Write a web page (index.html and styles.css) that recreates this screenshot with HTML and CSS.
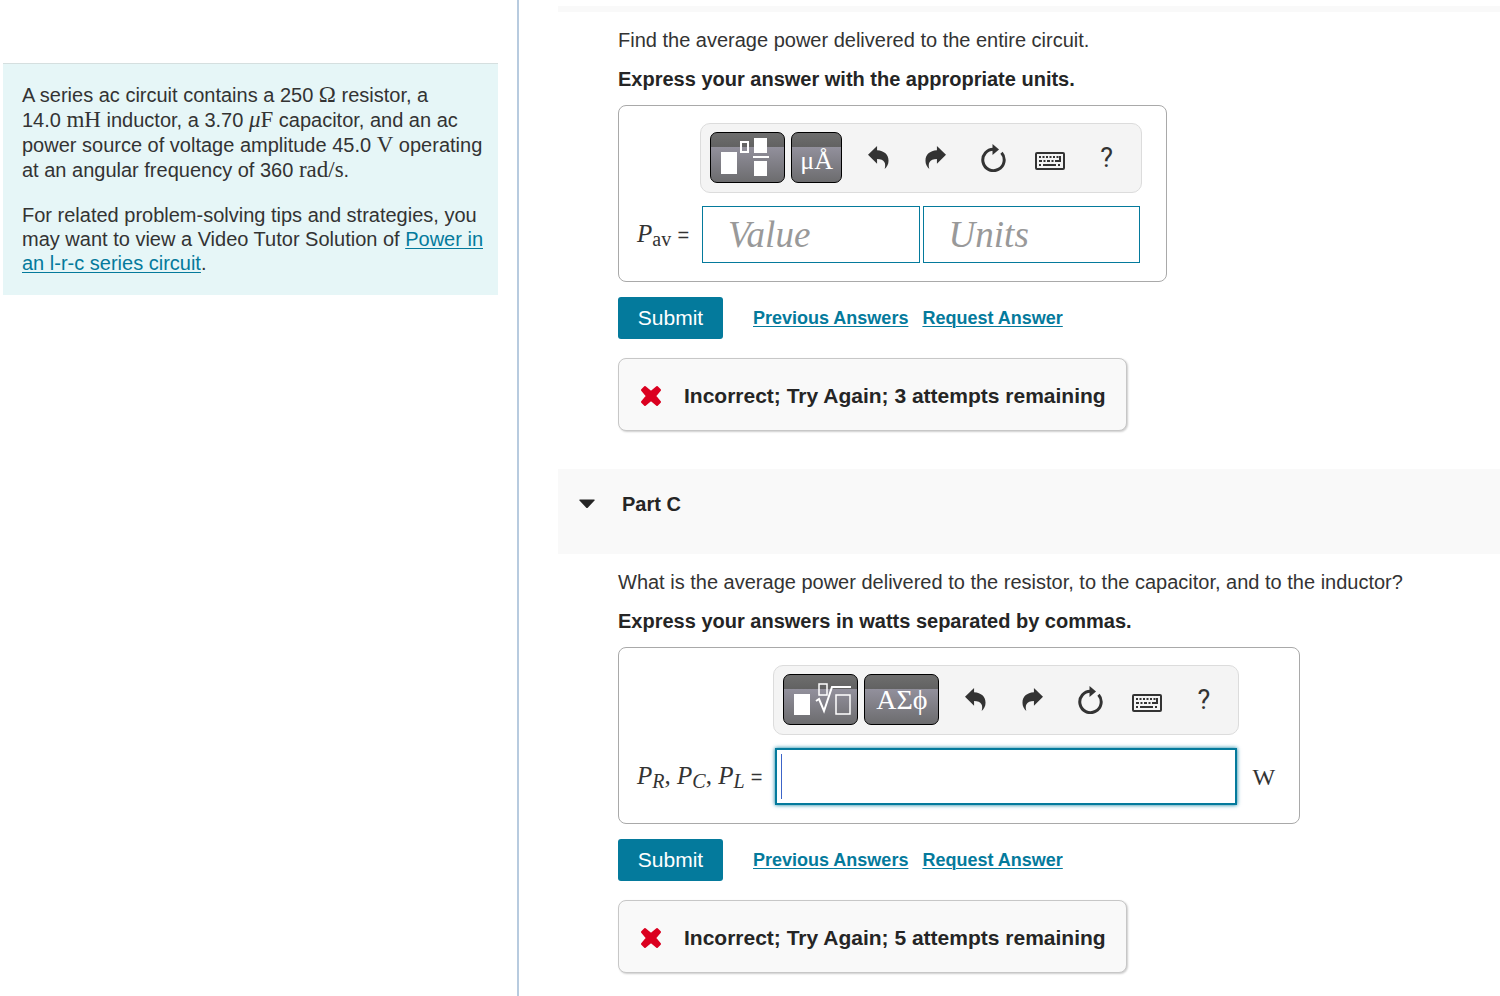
FILE: index.html
```html
<!DOCTYPE html>
<html lang="en">
<head>
    <meta charset="UTF-8">
    <meta name="viewport" content="width=device-width, initial-scale=1.0">
    <title>Power in an AC Circuit</title>
    <link rel="stylesheet" href="styles.css">
</head>
<body>
    <!-- Shared icons -->
    <svg class="sprite" aria-hidden="true">
        <symbol id="undo" viewBox="0 0 22 24">
            <path d="M0 9 L9.5 0 V4.5 C17 5 21.5 9 21.500 15.500 C21.500 19 20 22 17.500 24 C19 18 17.500 13.800 9.500 13.600 V18.500 Z"/>
        </symbol>
        <symbol id="redo" viewBox="0 0 22 24">
            <path d="M22 9 L12.5 0 V4.5 C5 5 0.5 9 0.5 15.5 C0.5 19 2 22 4.5 24 C3 18 4.5 13.8 12.5 13.6 V18.5 Z"/>
        </symbol>
        <symbol id="reset" viewBox="0 0 26 28">
            <path d="M14 5.2 A10.7 10.7 0 1 0 21.5 8.8" fill="none" stroke="currentColor" stroke-width="3"/>
            <path d="M12.5 0 L19 5.5 L12.5 11 Z"/>
        </symbol>
        <symbol id="keyboard" viewBox="0 0 30 18">
            <rect x="1" y="1" width="28" height="16" rx="1" fill="none" stroke="currentColor" stroke-width="2"/>
            <path d="M4 5H25" fill="none" stroke="currentColor" stroke-width="2" stroke-dasharray="2 1.5"/>
            <path d="M4 9H22" fill="none" stroke="currentColor" stroke-width="2" stroke-dasharray="3 1.5 2 1.5"/>
            <path d="M25 4V9H22" fill="none" stroke="currentColor" stroke-width="2"/>
            <path d="M4 13H6 M8 13H21 M23 13H25" fill="none" stroke="currentColor" stroke-width="2"/>
        </symbol>
        <symbol id="cross" viewBox="0 0 22 22">
            <path d="M5 2 L11 7 L17 2 L20 5 L15 11 L20 17 L17 20 L11 15 L5 20 L2 17 L7 11 L2 5 Z" stroke="currentColor" stroke-width="2" stroke-linejoin="round"/>
        </symbol>
    </svg>

    <div class="page">
        <aside class="sidebar">
            <div class="problem">
                <p class="statement">A series ac circuit contains a 250&nbsp;<span class="math">Ω</span> resistor, a 14.0&nbsp;<span class="math">mH</span> inductor, a 3.70&nbsp;<span class="math"><i>μ</i>F</span> capacitor, and an ac power source of voltage amplitude 45.0&nbsp;<span class="math">V</span> operating at an angular frequency of 360&nbsp;<span class="math">rad/s</span>.</p>
                <p>For related problem-solving tips and strategies, you may want to view a Video Tutor Solution of <a href="#">Power in an l-r-c series circuit</a>.</p>
            </div>
        </aside>

        <main class="parts">
            <section class="part">
                <div class="part-edge"></div>
                <div class="part-body">
                    <p class="question">Find the average power delivered to the entire circuit.</p>
                    <p class="instructions">Express your answer with the appropriate units.</p>

                    <div class="answer-box">
                        <div class="toolbar">
                            <button type="button" class="tool" aria-label="Templates">
                                <svg width="53" height="40" viewBox="0 0 53 40">
                                    <rect x="0" y="14" width="16" height="22" fill="#fff"/>
                                    <rect x="20" y="4" width="7" height="10" fill="none" stroke="#fff" stroke-width="2"/>
                                    <rect x="33" y="0" width="13" height="15" fill="#fff"/>
                                    <rect x="32" y="18" width="16" height="2" fill="#fff"/>
                                    <rect x="33" y="23" width="13" height="15" fill="#fff"/>
                                </svg>
                            </button>
                            <button type="button" class="tool tool-small">μÅ</button>
                            <div class="icons">
                                <button type="button" aria-label="Undo"><svg width="21" height="23"><use href="#undo"/></svg></button>
                                <button type="button" aria-label="Redo"><svg width="21" height="23"><use href="#redo"/></svg></button>
                                <button type="button" aria-label="Reset"><svg width="26" height="28"><use href="#reset"/></svg></button>
                                <button type="button" class="keys" aria-label="Keyboard shortcuts"><svg width="30" height="18"><use href="#keyboard"/></svg></button>
                                <button type="button" class="help">?</button>
                            </div>
                        </div>
                        <label class="variable" for="value"><i>P</i><sub>av</sub> <span class="equals">=</span></label>
                        <div class="fields">
                            <input type="text" id="value" placeholder="Value">
                            <input type="text" id="units" placeholder="Units" aria-label="Units">
                        </div>
                    </div>

                    <div class="actions">
                        <button type="button" class="submit">Submit</button>
                        <a href="#">Previous Answers</a>
                        <a href="#">Request Answer</a>
                    </div>

                    <div class="feedback">
                        <svg width="22" height="22"><use href="#cross"/></svg>
                        <span>Incorrect; Try Again; 3 attempts remaining</span>
                    </div>
                </div>
            </section>

            <section class="part">
                <h2 class="part-header">
                    <svg width="16" height="10" viewBox="0 0 16 10"><path d="M0.5 0.5 H15.5 V1.5 L9 8.5 Q8 9.5 7 8.5 L0.5 1.5 Z"/></svg>
                    Part C
                </h2>
                <div class="part-body">
                    <p class="question">What is the average power delivered to the resistor, to the capacitor, and to the inductor?</p>
                    <p class="instructions">Express your answers in watts separated by commas.</p>

                    <div class="answer-box">
                        <div class="toolbar">
                            <button type="button" class="tool" aria-label="Templates">
                                <svg width="60" height="40" viewBox="0 0 60 40">
                                    <rect x="3" y="14" width="16" height="21" fill="#fff"/>
                                    <rect x="28" y="4" width="8" height="11" fill="none" stroke="#fff" stroke-width="1.5"/>
                                    <path d="M25 21 L28 19 L33 31 L41 7 H60" fill="none" stroke="#fff" stroke-width="2"/>
                                    <rect x="45" y="15" width="14" height="19" fill="none" stroke="#fff" stroke-width="1.5"/>
                                </svg>
                            </button>
                            <button type="button" class="tool">ΑΣϕ</button>
                            <div class="icons">
                                <button type="button" aria-label="Undo"><svg width="21" height="23"><use href="#undo"/></svg></button>
                                <button type="button" aria-label="Redo"><svg width="21" height="23"><use href="#redo"/></svg></button>
                                <button type="button" aria-label="Reset"><svg width="26" height="28"><use href="#reset"/></svg></button>
                                <button type="button" class="keys" aria-label="Keyboard shortcuts"><svg width="30" height="18"><use href="#keyboard"/></svg></button>
                                <button type="button" class="help">?</button>
                            </div>
                        </div>
                        <label class="variable" for="watts"><i>P<sub>R</sub></i>, <i>P<sub>C</sub></i>, <i>P<sub>L</sub></i> <span class="equals">=</span></label>
                        <div class="fields active">
                            <span class="cursor"></span>
                            <input type="text" id="watts">
                        </div>
                        <span class="unit">W</span>
                    </div>

                    <div class="actions">
                        <button type="button" class="submit">Submit</button>
                        <a href="#">Previous Answers</a>
                        <a href="#">Request Answer</a>
                    </div>

                    <div class="feedback">
                        <svg width="22" height="22"><use href="#cross"/></svg>
                        <span>Incorrect; Try Again; 5 attempts remaining</span>
                    </div>
                </div>
            </section>
        </main>
    </div>
</body>
</html>
```
FILE: styles.css
```css
* {
    box-sizing: border-box;
}

body {
    margin: 0;
    font-family: "Liberation Sans", Arial, sans-serif;
    font-size: 20px;
    line-height: 24px;
    color: #333;
    background-color: #fff;
}

p {
    margin: 0;
}

a {
    color: #047a9c;
    text-decoration-thickness: 1px;
    text-underline-offset: 2px;
}

button {
    padding: 0;
    border: none;
    background: none;
    font-family: inherit;
    color: inherit;
    cursor: pointer;
}

svg {
    display: block;
    fill: currentColor;
}

.sprite {
    display: none;
}

.page {
    display: flex;
    min-height: 100vh;
}

/* Problem statement */
.sidebar {
    flex: 0 0 519px;
    padding: 63px 19px 0 3px;
    border-right: 2px solid #b8cbdf;
}

.problem {
    padding: 19px 9px 20px 19px;
    border-top: 1px solid #d5dfdf;
    background-color: #e6f6f7;
}

.problem p + p {
    margin-top: 20px;
}

.statement {
    line-height: 25px;
}

.math,
.variable,
.unit {
    font-family: "Liberation Serif", "Times New Roman", serif;
}

.math {
    font-size: 23px;
    line-height: 20px;
}

/* Parts */
.parts {
    flex: 1;
    padding-left: 39px;
}

.part {
    margin-bottom: 38px;
}

.part:last-child {
    margin-bottom: 0;
}

.part-edge {
    height: 6px;
    margin-top: 6px;
    background-color: #f9f9f9;
}

.part-header {
    display: flex;
    gap: 27px;
    height: 85px;
    margin: 0;
    padding: 23px 21px;
    font-size: 20px;
    color: #252525;
    background-color: #f9f9f9;
}

.part-header svg {
    margin-top: 7px;
}

.part-body {
    display: flex;
    flex-direction: column;
    align-items: flex-start;
    padding: 16px 0 0 60px;
}

.instructions {
    margin: 15px 0 14px;
    font-weight: bold;
    color: #252525;
}

.answer-box {
    display: grid;
    grid-template-columns: auto auto auto;
    row-gap: 13px;
    align-items: center;
    padding: 17px 24px 18px 18px;
    border: 1px solid #a9a9a9;
    border-radius: 8px;
}

.toolbar {
    grid-column: 2;
    display: flex;
    gap: 6px;
    padding: 8px 6px 9px 9px;
    border: 1px solid #dcdcdc;
    border-radius: 10px;
    background-color: #f4f4f4;
}

.tool {
    display: flex;
    align-items: center;
    justify-content: center;
    width: 75px;
    height: 51px;
    border: 1px solid #000;
    border-radius: 7px;
    background: linear-gradient(#6e6e6e 0, #626262 28%, #92909c 29%, #6c6c6e 100%);
    font-family: "Liberation Serif", "Times New Roman", serif;
    font-size: 28px;
    color: #fff;
}

.tool-small {
    width: 51px;
    padding-top: 6px;
    font-size: 26px;
}

.icons {
    display: flex;
    margin-left: 2px;
}

.icons button {
    display: flex;
    align-items: center;
    justify-content: center;
    width: 57px;
}

.icons .keys {
    padding-top: 7px;
}

.icons .help {
    font-family: Roboto, sans-serif;
    font-size: 27px;
}

.variable {
    grid-column: 1;
    padding-right: 11px;
    font-size: 25px;
    line-height: 32px;
    white-space: nowrap;
}

.variable sub {
    font-size: 20px;
    line-height: 0;
    vertical-align: -4px;
}

.equals {
    font-family: "Liberation Sans", Arial, sans-serif;
    font-size: 20px;
}

.fields {
    display: flex;
    gap: 3px;
    height: 57px;
    margin: 0 2px;
}

.fields input {
    flex: 1;
    width: 0;
    min-width: 0;
    padding: 0 25px;
    border: 1px solid #047a9c;
    background-color: #fff;
    font-family: "Liberation Serif", "Times New Roman", serif;
    font-size: 37px;
    color: #333;
}

.fields input::placeholder {
    font-style: italic;
    color: #999;
}

.fields.active {
    padding: 4px;
    border: 2px solid #047a9c;
    box-shadow: 0 0 4px #047a9c;
}

.fields.active input {
    border: none;
    outline: none;
}

.cursor {
    width: 1px;
    background-color: #3c64c8;
}

.unit {
    padding-left: 13px;
    font-size: 24px;
}

.actions {
    display: flex;
    align-items: center;
    gap: 14px;
    margin: 15px 0 19px;
    font-size: 18px;
    font-weight: bold;
}

.submit {
    width: 105px;
    height: 42px;
    margin-right: 16px;
    border-radius: 3px;
    background-color: #047a9c;
    font-size: 21px;
    color: #fff;
}

.feedback {
    display: flex;
    align-items: center;
    gap: 22px;
    height: 73px;
    padding: 2px 20px 0 21px;
    border: 1px solid #c7c7c7;
    border-radius: 8px;
    background-color: #f9f9f9;
    box-shadow: 1px 1px 2px rgba(0, 0, 0, 0.2);
    font-size: 21px;
    font-weight: bold;
    color: #252525;
}

.feedback svg {
    color: #db0020;
}
```
